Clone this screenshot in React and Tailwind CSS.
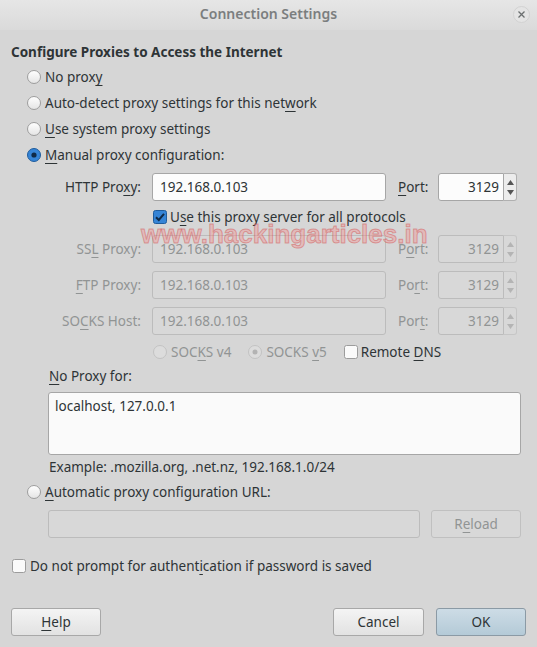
const U = ({ children }) => <span className="underline underline-offset-[3px] decoration-1">{children}</span>;

function Radio({ checked, disabled }) {
  if (checked && !disabled) {
    return (
      <svg width="14" height="14" viewBox="0 0 14 14" className="shrink-0">
        <circle cx="7" cy="7" r="6.5" fill="#3584d6" stroke="#1f5c9c" />
        <circle cx="7" cy="7" r="2.6" fill="#0f2a47" />
      </svg>
    );
  }
  return (
    <svg width="14" height="14" viewBox="0 0 14 14" className="shrink-0">
      <defs>
        <linearGradient id="rg" x1="0" y1="0" x2="0" y2="1">
          <stop offset="0" stopColor="#ffffff" />
          <stop offset="1" stopColor="#e4e4e4" />
        </linearGradient>
      </defs>
      <circle cx="7" cy="7" r="6.5" fill={disabled ? '#dcdcdc' : 'url(#rg)'} stroke={disabled ? '#c2c2c2' : '#9c9c9c'} />
      {checked && <circle cx="7" cy="7" r="2.5" fill="#b3b3b3" />}
    </svg>
  );
}

function Check({ checked }) {
  if (checked) {
    return (
      <svg width="14" height="14" viewBox="0 0 14 14" className="shrink-0">
        <rect x="0.5" y="0.5" width="13" height="13" rx="2" fill="#3584d6" stroke="#1f5c9c" />
        <path d="M3 7.2 L5.8 10 L11 3.8" fill="none" stroke="#0f2a47" strokeWidth="2" />
      </svg>
    );
  }
  return (
    <svg width="14" height="14" viewBox="0 0 14 14" className="shrink-0">
      <rect x="0.5" y="0.5" width="13" height="13" rx="2" fill="#fafafa" stroke="#9c9c9c" />
    </svg>
  );
}

function Spin({ value, disabled }) {
  return (
    <div className="flex h-[28px]">
      <div className={`w-[66px] h-full flex items-center justify-end pr-[4px] rounded-l-[3px] border ${disabled ? 'border-[#bcbcbc] bg-[#d8d8d8] text-[#919494]' : 'border-[#a6a6a6] bg-[#fcfcfc] text-[#2e3436]'}`}>
        {value}
      </div>
      <div className={`w-[13px] h-full flex flex-col items-center justify-center gap-[5px] border border-l-0 rounded-r-[3px] ${disabled ? 'border-[#c6c6c6] bg-[#d8d8d8]' : 'border-[#b0b0b0] bg-[#ececec]'}`}>
        <svg width="7" height="5" viewBox="0 0 7 5"><path d="M3.5 0 L7 5 L0 5 Z" fill={disabled ? '#b4b4b4' : '#555'} /></svg>
        <svg width="7" height="5" viewBox="0 0 7 5"><path d="M0 0 L7 0 L3.5 5 Z" fill={disabled ? '#b4b4b4' : '#555'} /></svg>
      </div>
    </div>
  );
}

function ProxyRow({ label, port, disabled, className }) {
  return (
    <div className={`flex items-center h-[28px] ${className}`}>
      <div className={`w-[141px] text-right ${disabled ? 'text-[#919494]' : ''}`}>{label}</div>
      <div className={`ml-[11px] w-[234px] h-full flex items-center pl-[7px] rounded-[3px] border ${disabled ? 'border-[#bcbcbc] bg-[#d8d8d8] text-[#919494]' : 'border-[#a6a6a6] bg-[#fcfcfc]'}`}>
        192.168.0.103
      </div>
      <div className={`ml-[12px] w-[40px] ${disabled ? 'text-[#919494]' : ''}`}>{port}</div>
      <Spin value="3129" disabled={disabled} />
    </div>
  );
}

function Button({ children, primary, disabled, className }) {
  return (
    <div className={`h-[28px] flex items-center justify-center rounded-[3px] border ${primary ? 'border-[#8b9aa5] bg-gradient-to-b from-[#cddce6] to-[#b4cad7]' : disabled ? 'border-[#c0c0c0] bg-[#d8d8d8] text-[#919494]' : 'border-[#a8a8a8] bg-gradient-to-b from-[#f4f4f4] to-[#e2e2e2]'} ${className}`}>
      {children}
    </div>
  );
}

export default function App() {
  return (
    <div className="relative w-[537px] h-[647px] overflow-hidden bg-[#d6d6d6] text-[#2e3436] text-[13.5px] leading-[20px] font-['Noto_Sans',sans-serif]">
      {/* Title bar */}
      <div className="h-[30px] flex items-center justify-center relative bg-gradient-to-b from-[#e6e6e6] to-[#dadada]">
        <span className="font-semibold text-[14px] text-[#7b7e7f] -mt-[2px]">Connection Settings</span>
        <div className="absolute right-[7px] top-[6px] w-[17px] h-[17px] rounded-full bg-[#e4e4e4] border border-[#d2d2d2] flex items-center justify-center">
          <svg width="7" height="7" viewBox="0 0 7 7"><path d="M0.5 0.5 L6.5 6.5 M6.5 0.5 L0.5 6.5" stroke="#6b6f70" strokeWidth="1.3" /></svg>
        </div>
      </div>

      <div className="flex flex-col pl-[11px] pr-[11px]">
        <div className="mt-[12px] h-[20px] font-bold">Configure Proxies to Access the Internet</div>

        <div className="mt-[2px] flex flex-col pl-[16px]">
          <div className="h-[26px] flex items-center gap-[4px]"><Radio /><span>No prox<U>y</U></span></div>
          <div className="h-[26px] flex items-center gap-[4px]"><Radio /><span>Auto-detect proxy settings for this net<U>w</U>ork</span></div>
          <div className="h-[26px] flex items-center gap-[4px]"><Radio /><span><U>U</U>se system proxy settings</span></div>
          <div className="h-[26px] flex items-center gap-[4px]"><Radio checked /><span><U>M</U>anual proxy configuration:</span></div>
        </div>

        <ProxyRow className="mt-[5px] -ml-[11px]" label={<>HTTP Pro<U>x</U>y:</>} port={<><U>P</U>ort:</>} />

        <div className="mt-[4px] h-[24px] flex items-center gap-[3px] pl-[142px]">
          <Check checked /><span>U<U>s</U>e this proxy server for all protocols</span>
        </div>

        <ProxyRow disabled className="mt-[6px] -ml-[11px]" label={<>SS<U>L</U> Proxy:</>} port={<>P<U>o</U>rt:</>} />
        <ProxyRow disabled className="mt-[8px] -ml-[11px]" label={<><U>F</U>TP Proxy:</>} port={<>Po<U>r</U>t:</>} />
        <ProxyRow disabled className="mt-[8px] -ml-[11px]" label={<>SO<U>C</U>KS Host:</>} port={<>Por<U>t</U>:</>} />

        <div className="mt-[6px] h-[22px] flex items-center pl-[142px]">
          <div className="flex items-center gap-[4px] text-[#919494]"><Radio disabled /><span>SOC<U>K</U>S v4</span></div>
          <div className="ml-[17px] flex items-center gap-[4px] text-[#919494]"><Radio disabled checked /><span>SOCKS <U>v</U>5</span></div>
          <div className="ml-[17px] flex items-center gap-[3px]"><Check /><span>Remote <U>D</U>NS</span></div>
        </div>

        <div className="mt-[3px] h-[20px] pl-[38px]"><U>N</U>o Proxy for:</div>
        <div className="mt-[6px] ml-[37px] h-[63px] w-[473px] rounded-[3px] border border-[#a6a6a6] bg-[#fafafa] px-[6px] pt-[3px]">
          localhost, 127.0.0.1
        </div>
        <div className="mt-[2px] h-[20px] pl-[38px]">Example: .mozilla.org, .net.nz, 192.168.1.0/24</div>

        <div className="mt-[2px] h-[26px] flex items-center gap-[4px] pl-[16px]">
          <Radio /><span><U>A</U>utomatic proxy configuration URL:</span>
        </div>
        <div className="mt-[5px] h-[28px] flex pl-[37px]">
          <div className="w-[372px] h-full rounded-[3px] border border-[#bcbcbc] bg-[#d8d8d8]" />
          <Button disabled className="ml-[11px] w-[90px]">R<U>e</U>load</Button>
        </div>

        <div className="mt-[16px] h-[24px] flex items-center gap-[4px] pl-[1px]">
          <Check /><span>Do not prompt for authent<U>i</U>cation if password is saved</span>
        </div>

        <div className="mt-[30px] flex items-center">
          <Button className="w-[90px]"><U>H</U>elp</Button>
          <div className="flex-1" />
          <Button className="w-[91px]">Cancel</Button>
          <Button primary className="ml-[12px] w-[90px]">OK</Button>
        </div>
      </div>

      {/* Watermark */}
      <div className="absolute left-[141px] top-[219px] text-[26px] leading-[30px] font-bold text-[rgba(240,150,150,0.45)] font-['Liberation_Sans',sans-serif] [-webkit-text-stroke:1px_rgba(205,60,60,0.4)] pointer-events-none select-none">
        www.hackingarticles.in
      </div>
    </div>
  );
}
